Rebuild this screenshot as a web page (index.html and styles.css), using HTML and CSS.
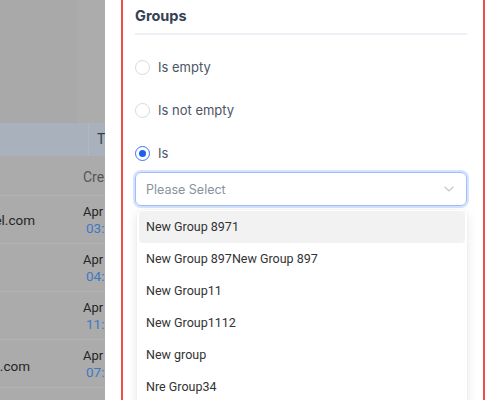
FILE: index.html
```
<!DOCTYPE html>
<html>
<head>
<meta charset="utf-8">
<link rel="stylesheet" href="styles.css">
</head>
<body>
<div class="page">
  <div class="backdrop">
    <div class="bd-top"><div class="bd-top-a"></div><div class="bd-top-b"></div></div>
    <div class="bd-head"><div class="c1"></div><div class="c2">Type</div></div>
    <div class="bd-row sub"><div class="c1"></div><div class="c2 gray">Created</div></div>
    <div class="bd-row"><div class="c1 e1"><span>jane@hotel.com</span></div><div class="c2"><div>Apr 12</div><div class="blue">03:06 PM</div></div></div>
    <div class="bd-row"><div class="c1"></div><div class="c2"><div>Apr 12</div><div class="blue">04:35 PM</div></div></div>
    <div class="bd-row"><div class="c1"></div><div class="c2"><div>Apr 12</div><div class="blue">11:52 AM</div></div></div>
    <div class="bd-row"><div class="c1 e2"><span>jack@gmail.com</span></div><div class="c2"><div>Apr 12</div><div class="blue">07:31 PM</div></div></div>
    <div class="bd-row"><div class="c1"></div><div class="c2"></div></div>
  </div>
  <div class="drawer">
    <div class="box">
      <div class="title">Groups</div>
      <div class="divider"></div>
      <div class="radio"><span class="circle"></span><span>Is empty</span></div>
      <div class="radio"><span class="circle"></span><span>Is not empty</span></div>
      <div class="radio last"><span class="circle on"></span><span>Is</span></div>
      <div class="select-wrap">
        <div class="select">
          <span class="ph">Please Select</span>
          <svg class="chev" width="12" height="8" viewBox="0 0 12 8"><path d="M1.5 1.8 L6 6 L10.5 1.8" fill="none" stroke="#c3c7cf" stroke-width="1.2"/></svg>
        </div>
        <div class="menu">
          <div class="item hl">New Group 8971</div>
          <div class="item">New Group 897New Group 897</div>
          <div class="item">New Group11</div>
          <div class="item">New Group1112</div>
          <div class="item">New group</div>
          <div class="item">Nre Group34</div>
          <div class="item">New Group 55</div>
        </div>
      </div>
    </div>
  </div>
</div>
</body>
</html>
```
FILE: styles.css
```
html, body { margin: 0; padding: 0; }
body { width: 495px; height: 400px; overflow: hidden; font-family: Inter, "Noto Sans", sans-serif; background: #fff; }
.page { display: flex; height: 400px; overflow: hidden; }
.backdrop { width: 105px; flex: none; background: #ababab; overflow: hidden; font-family: Roboto, sans-serif; font-size: 14px; color: #262626; }
.bd-top { height: 123px; display: flex; }
.bd-top-a { width: 78px; background: #a9a9a9; }
.bd-top-b { flex: 1; background: #acacac; }
.bd-head { height: 33px; display: flex; background: #a8b1bc; }
.bd-head .c1 { width: 88px; flex: none; }
.bd-head .c2 { flex: 1; border-left: 1px solid #b0b8c2; padding-left: 8px; line-height: 33px; white-space: nowrap; overflow: hidden; color: #3a3f46; }
.bd-row { height: 48px; display: flex; border-bottom: 1px solid #b3b3b3; box-sizing: border-box; }
.bd-row.sub { height: 40px; }
.bd-row .c1 { width: 82px; flex: none; display: flex; align-items: center; justify-content: flex-end; white-space: nowrap; overflow: hidden; font-size: 13.5px; box-sizing: border-box; }
.bd-row .c1 span { flex: none; }
.bd-row .c1.e1 { padding-right: 47px; }
.bd-row .c1.e2 { padding-right: 52px; padding-top: 4px; }
.bd-row .c2 { flex: 1; padding-left: 1px; display: flex; flex-direction: column; justify-content: center; white-space: nowrap; overflow: hidden; font-size: 13px; line-height: 16px; background: #ababab; }
.bd-row .c2 .blue { color: #3f78c2; padding-left: 3px; font-size: 13.5px; }
.bd-row .c2.gray { color: #555; font-size: 14px; padding-top: 2px; }
.drawer { flex: 1; background: #fff; padding-left: 16px; padding-right: 10px; }
.box { margin-top: -10px; height: 430px; border: 2px solid #ef4c4c; border-radius: 2px; padding: 0 16px 0 12px; box-sizing: border-box; }
.title { margin-top: 14px; font-size: 14.5px; font-weight: 700; color: #344054; line-height: 20px; }
.divider { height: 2px; background: #eef0f6; margin-top: 7px; margin-bottom: 22px; }
.radio { display: flex; align-items: center; height: 20px; margin-bottom: 23px; font-size: 13px; color: #4b5565; }
.radio.last { margin-bottom: 9px; }
.circle { width: 13px; height: 13px; border: 1px solid #d6d9de; border-radius: 50%; margin-right: 8px; flex: none; background: #fff; position: relative; }
.circle.on { border-color: #3b74f2; }
.circle.on::after { content: ""; position: absolute; left: 3px; top: 3px; width: 7px; height: 7px; border-radius: 50%; background: #1f5ff0; }
.select-wrap { position: relative; }
.select { height: 34px; border: 1px solid #9fbdfa; box-shadow: 0 0 0 2px #d6e3fd; border-radius: 6px; box-sizing: border-box; display: flex; align-items: center; justify-content: space-between; padding: 0 10px 0 10px; }
.ph { font-size: 12.5px; color: #8991a0; }
.chev { margin-right: 1px; }
.menu { position: absolute; left: 2px; right: 0; top: 38px; background: #fff; border-radius: 6px; box-shadow: 0 3px 12px rgba(0,0,0,0.10), 0 0 2px rgba(0,0,0,0.06); padding: 1px 2px; font-family: Roboto, sans-serif; font-size: 12.5px; color: #333; }
.item { height: 32px; line-height: 32px; padding-left: 7px; border-radius: 4px; }
.item.hl { background: #f2f2f2; }
```
